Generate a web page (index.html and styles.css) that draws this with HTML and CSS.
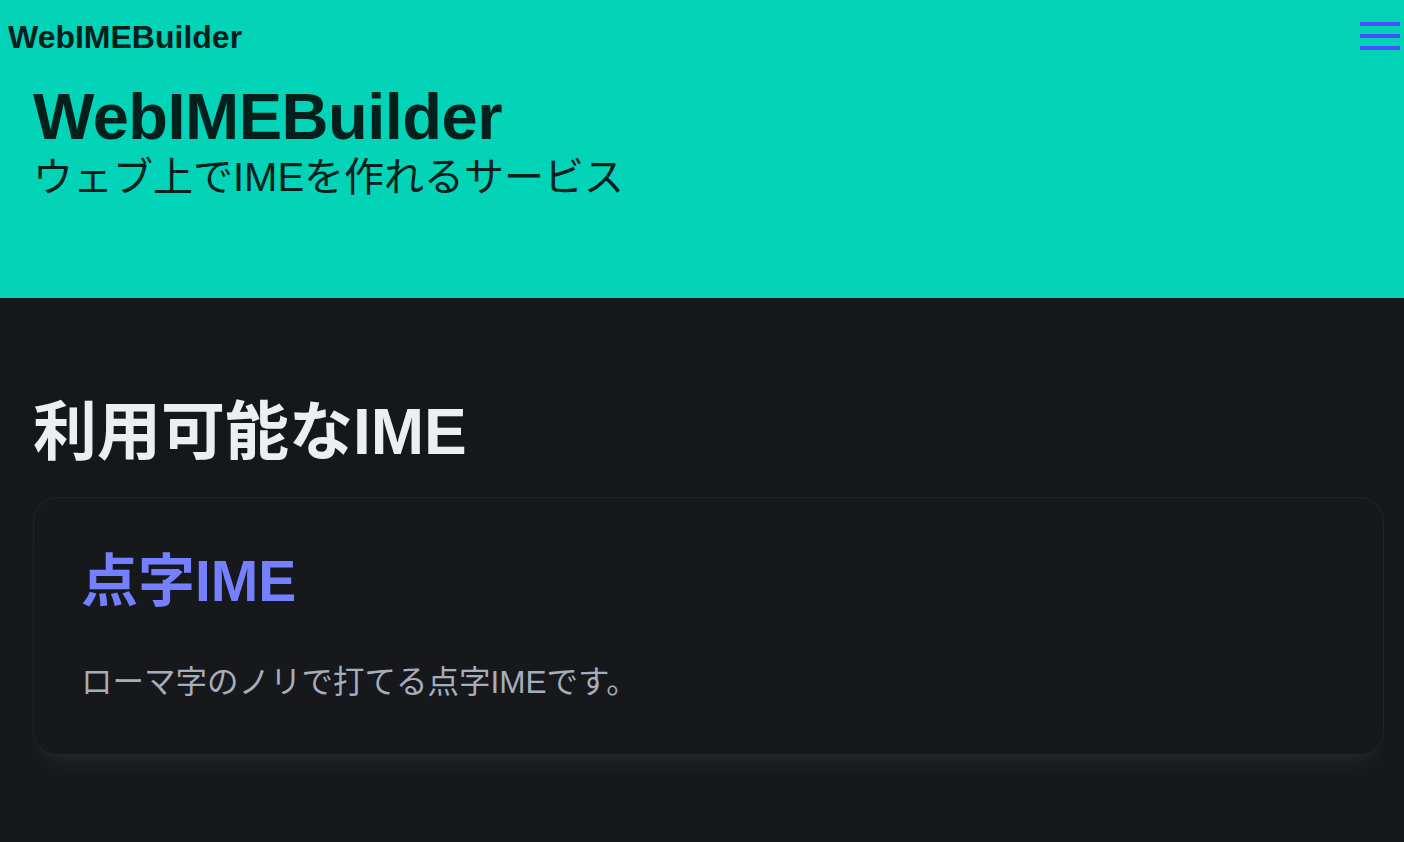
FILE: index.html
```html
<!DOCTYPE html>
<html lang="ja">
<head>
<meta charset="utf-8">
<title>WebIMEBuilder</title>
<link rel="stylesheet" href="styles.css">
</head>
<body>
<header class="hero">
  <nav class="navbar">
    <a class="brand" href="#">WebIMEBuilder</a>
    <button class="menu" aria-label="menu">
      <svg width="40" height="28" viewBox="0 0 40 28"><rect x="0" y="0" width="40" height="4" fill="#4650ff"/><rect x="0" y="12" width="40" height="4" fill="#4650ff"/><rect x="0" y="24" width="40" height="4" fill="#4650ff"/></svg>
    </button>
  </nav>
  <div class="hero-content">
    <h1 class="hero-title">WebIMEBuilder</h1>
    <p class="hero-sub">ウェブ上でIMEを作れるサービス</p>
  </div>
</header>
<main class="main">
  <h2 class="section-title">利用可能なIME</h2>
  <div class="card">
    <h3 class="card-title">点字IME</h3>
    <p class="card-text">ローマ字のノリで打てる点字IMEです。</p>
  </div>
</main>
</body>
</html>
```

FILE: styles.css
```css
* { box-sizing: border-box; }
html, body { margin: 0; padding: 0; }
body {
  background: #15171b;
  font-family: "Liberation Sans", "Noto Sans CJK JP", sans-serif;
  color: #eceef2;
  min-height: 842px;
}
.hero {
  background: #03d3b6;
  height: 298px;
  color: #03201c;
}
.navbar {
  display: flex;
  align-items: center;
  justify-content: space-between;
  height: 74px;
  padding: 0 4px 0 8px;
}
.brand {
  font-size: 32px;
  font-weight: 700;
  color: #03201c;
  text-decoration: none;
}
.menu {
  background: none;
  border: 0;
  padding: 0;
  display: flex;
  align-self: flex-start;
  margin-top: 22px;
}
.hero-content {
  padding: 0 33px;
}
.hero-title {
  margin: 0;
  font-size: 65px;
  font-weight: 700;
  line-height: 1;
  padding-top: 10px;
  letter-spacing: -0.5px;
}
.hero-sub {
  margin: 4px 0 0;
  font-size: 40px;
  font-weight: 400;
  line-height: 1.2;
}
.main {
  padding: 99px 20px 0 33px;
}
.section-title {
  margin: 0 0 30px;
  font-size: 64px;
  font-weight: 700;
  line-height: 1.1;
  color: #eceef2;
}
.card {
  background: #16181c;
  border: 1px solid #212328;
  border-radius: 24px;
  padding: 49px 48px 49px 47px;
  box-shadow: 0 20px 25px -5px rgba(255,255,255,0.04), 0 8px 10px -6px rgba(255,255,255,0.04);
}
.card-title {
  margin: 0;
  font-size: 57px;
  font-weight: 700;
  line-height: 1.2;
  color: #7480ff;
}
.card-text {
  margin: 44px 0 0;
  font-size: 31.5px;
  line-height: 1.42;
  color: #a6adbb;
}
```
